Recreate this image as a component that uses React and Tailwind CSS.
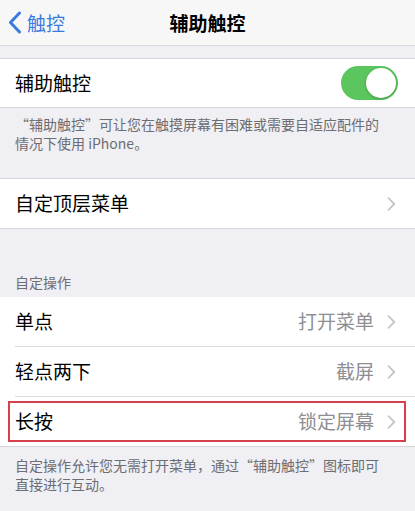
import React from 'react';

const font = { fontFamily: '"Noto Sans CJK SC", "Noto Sans", sans-serif' };

function Chevron() {
  return (
    <svg width="9" height="14" viewBox="0 0 9 14" fill="none" className="shrink-0">
      <path d="M1.5 1.2 L7.3 7 L1.5 12.8" stroke="#c4c4c9" strokeWidth="1.8" strokeLinecap="round" strokeLinejoin="round" />
    </svg>
  );
}

function Toggle() {
  return (
    <div className="w-[57px] h-[34px] rounded-full bg-[#5cc65e] p-[2px] flex justify-end">
      <div className="w-[30px] h-[30px] rounded-full bg-white shadow-[0_1px_3px_rgba(0,0,0,0.25)]" />
    </div>
  );
}

function Row({ label, value, last, highlight, height = 'h-[50px]' }) {
  return (
    <div className={`relative bg-white ${height} pl-[15px]`}>
      <div className={`h-full flex items-center pr-[19px] ${last ? '' : 'border-b border-[#dcdce0]'}`}>
        <span className="text-[19px] text-black flex-1">{label}</span>
        {value && <span className="text-[19px] text-[#8e8e93] mr-[13px]">{value}</span>}
        <Chevron />
      </div>
      {highlight && (
        <div className="absolute left-[8px] right-[9px] top-[4px] bottom-[4px] border-2 border-[#d5404c]" />
      )}
    </div>
  );
}

export default function App() {
  return (
    <div className="w-[415px] h-[511px] overflow-hidden bg-[#efeff4]" style={font}>
      {/* 导航栏 */}
      <div className="h-[46px] bg-[#f7f7f8] border-b border-[#d9d9dc] grid grid-cols-[1fr_auto_1fr] items-center">
        <div className="flex items-center pl-[8px] text-[#3a7be0]">
          <svg width="14" height="23" viewBox="0 0 14 23" fill="none">
            <path d="M11.5 2 L2.5 11.5 L11.5 21" stroke="#3a7be0" strokeWidth="3" strokeLinecap="round" strokeLinejoin="round" />
          </svg>
          <span className="text-[19px] ml-[5px] leading-none">触控</span>
        </div>
        <div className="text-[19px] font-semibold text-black leading-none">辅助触控</div>
        <div />
      </div>

      <div className="h-[12px]" />

      {/* 开关 */}
      <div className="bg-white border-y border-[#d6d6da] h-[50px] flex items-center pl-[15px] pr-[17px]">
        <span className="text-[19px] text-black flex-1">辅助触控</span>
        <Toggle />
      </div>

      <div className="h-[70px] px-[15px] pt-[7px] text-[14px] leading-[19px] text-[#6d6d72]">
        “辅助触控”可让您在触摸屏幕有困难或需要自适应配件的
        <br />
        情况下使用 iPhone。
      </div>

      <div className="border-y border-[#d6d6da]">
        <Row label="自定顶层菜单" last height="h-[49px]" />
      </div>

      {/* 自定操作 */}
      <div className="h-[68px] px-[15px] pt-[44px] text-[14px] leading-[19px] text-[#6d6d72]">自定操作</div>

      <div className="border-b border-[#d6d6da]">
        <Row label="单点" value="打开菜单" />
        <Row label="轻点两下" value="截屏" />
        <Row label="长按" value="锁定屏幕" last highlight height="h-[49px]" />
      </div>

      <div className="px-[15px] pt-[9px] text-[14px] leading-[19px] text-[#6d6d72]">
        自定操作允许您无需打开菜单，通过“辅助触控”图标即可
        <br />
        直接进行互动。
      </div>
    </div>
  );
}
